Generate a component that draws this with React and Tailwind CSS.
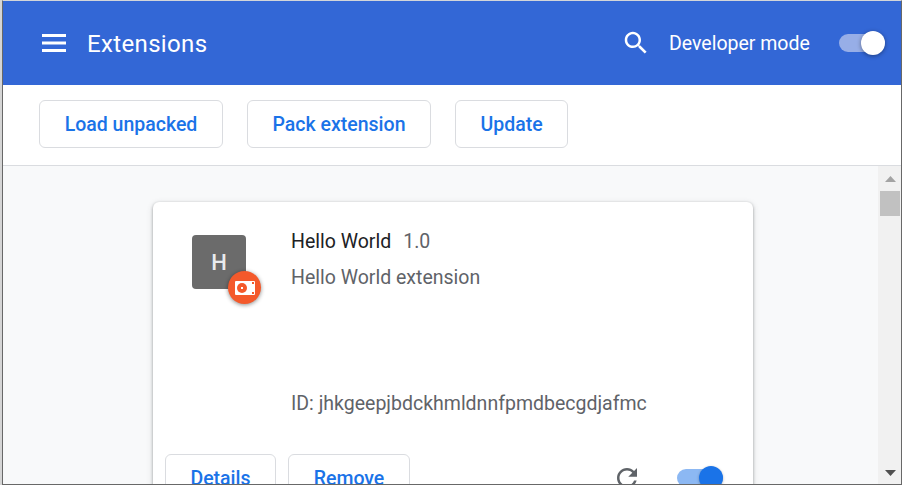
import React from "react";

const actions = [
  { label: "Load unpacked", width: "w-[184px]" },
  { label: "Pack extension", width: "w-[184px]" },
  { label: "Update", width: "w-[113px]" },
];

function OutlineButton({ children, width }) {
  return (
    <button
      className={`${width} flex h-12 shrink-0 items-center justify-center whitespace-nowrap rounded-md border border-[#dadce0] bg-white pt-0.5 text-[19.5px] font-medium leading-none text-[#1a73e8]`}
    >
      {children}
    </button>
  );
}

function Toolbar() {
  return (
    <header className="flex h-[84px] shrink-0 items-center bg-[#3367d6] text-white">
      <svg className="ml-[39px] h-[18px] w-6 shrink-0" viewBox="0 0 24 18" fill="currentColor">
        <path d="M0 0h24v3H0zM0 8h24v2H0zM0 15h24v3H0z" />
        <path d="M0 7h24v1H0zM0 10h24v1H0z" opacity=".5" />
      </svg>
      <h1 className="ml-[21px] pt-0.5 text-[24px] font-normal leading-[36px] tracking-[0.35px]">Extensions</h1>
      <svg className="ml-auto h-[30px] w-[30px] shrink-0" viewBox="0 0 24 24" fill="currentColor">
        <path d="M15.5 14h-.79l-.28-.27C15.41 12.59 16 11.11 16 9.5 16 5.91 13.09 3 9.5 3S3 5.91 3 9.5 5.91 16 9.5 16c1.61 0 3.09-.59 4.23-1.57l.27.28v.79l5 4.99L20.49 19l-4.99-5zm-6 0C7.01 14 5 11.99 5 9.5S7.01 5 9.5 5 14 7.01 14 9.5 11.99 14 9.5 14z" />
      </svg>
      <span className="ml-[18px] w-[143px] whitespace-nowrap pt-0.5 text-[19.5px] leading-[30px]">Developer mode</span>
      <span className="ml-[27px] mr-4 flex h-[18px] w-[46px] shrink-0 items-center justify-end rounded-full bg-[#97aee7]">
        <span className="h-6 w-6 shrink-0 rounded-full bg-white shadow-[0_1px_4px_rgba(0,0,0,0.4)]" />
      </span>
    </header>
  );
}

function ExtensionIcon() {
  return (
    <div className="relative ml-[39px] mt-[33px] flex h-[54px] w-[54px] shrink-0 items-center justify-center rounded-[4px] bg-[#6b6b6b] text-[22px] font-medium text-[#e8eaed]">
      H
      <span className="absolute left-9 top-9 flex h-[33px] w-[33px] items-center justify-center rounded-full bg-[#f4592b] shadow-[0_1px_4px_rgba(0,0,0,0.45)]">
        <svg className="h-[14px] w-5" viewBox="0 0 20 14">
          <rect width="20" height="14" rx="1" fill="#fff" />
          <circle cx="7" cy="7" r="5" fill="#f4592b" />
          <rect x="6" y="6" width="2" height="2" fill="#fff" />
          <path d="M17 1h2v2h-2zM17 11h2v2h-2z" fill="#f4592b" />
        </svg>
      </span>
    </div>
  );
}

function ExtensionCard() {
  return (
    <article className="ml-[150px] mt-9 flex h-[320px] w-[600px] shrink-0 flex-col rounded-md bg-white shadow-[0_1px_3px_rgba(60,64,67,0.45),0_2px_7px_rgba(60,64,67,0.16)]">
      <div className="flex h-[252px] shrink-0">
        <ExtensionIcon />
        <div className="ml-[45px] flex flex-col pt-[25px] text-[19.5px] leading-[30px] text-[#5f6368]">
          <div className="flex gap-3">
            <span className="text-[#202124]">Hello World</span>
            <span>1.0</span>
          </div>
          <p className="mt-1.5">Hello World extension</p>
          <p className="mt-24 whitespace-nowrap">ID: jhkgeepjbdckhmldnnfpmdbecgdjafmc</p>
        </div>
      </div>
      <footer className="flex h-12 shrink-0 items-center gap-3 pl-3">
        <OutlineButton width="w-[111px]">Details</OutlineButton>
        <OutlineButton width="w-[122px]">Remove</OutlineButton>
        <svg className="ml-auto h-[30px] w-[30px] shrink-0" viewBox="0 0 24 24" fill="#5f6368">
          <path d="M17.65 6.35C16.2 4.9 14.21 4 12 4c-4.42 0-7.99 3.58-7.99 8s3.57 8 7.99 8c3.73 0 6.84-2.55 7.73-6h-2.08c-.82 2.33-3.04 4-5.65 4-3.31 0-6-2.69-6-6s2.69-6 6-6c1.66 0 3.14.69 4.22 1.78L13 11h7V4l-2.35 2.35z" />
        </svg>
        <span className="ml-[23px] mr-[30px] flex h-[18px] w-[46px] shrink-0 items-center justify-end rounded-full bg-[#8cb8f3]">
          <span className="h-6 w-6 shrink-0 rounded-full bg-[#1a73e8] shadow-[0_1px_3px_rgba(0,0,0,0.3)]" />
        </span>
      </footer>
    </article>
  );
}

function Scrollbar() {
  return (
    <div className="flex w-[23px] shrink-0 flex-col items-center bg-[#f1f1f1] pl-px">
      <svg className="mt-[10px] h-[6px] w-[11px] shrink-0" viewBox="0 0 11 6" fill="#a3a3a3">
        <path d="M5.5 0 11 6H0z" />
      </svg>
      <div className="mt-[9px] h-[25px] w-5 shrink-0 bg-[#c1c1c1]" />
      <svg className="mb-[8px] mt-auto h-[6px] w-[11px] shrink-0" viewBox="0 0 11 6" fill="#505050">
        <path d="M0 0h11L5.5 6z" />
      </svg>
    </div>
  );
}

export default function App() {
  return (
    <div className="flex h-[485px] w-[902px] overflow-hidden bg-[#d5d5d5] pl-0.5 font-['Roboto',sans-serif]">
      <main className="flex h-full w-[900px] flex-col overflow-hidden border border-[#686868] border-t-[#d3d5d9] bg-white">
        <Toolbar />
        <div className="flex h-[81px] shrink-0 gap-6 border-b border-[#dadce0] pl-9 pt-[15px]">
          {actions.map((action) => (
            <OutlineButton key={action.label} width={action.width}>
              {action.label}
            </OutlineButton>
          ))}
        </div>
        <div className="flex min-h-0 flex-1 overflow-hidden">
          <section className="flex min-w-0 flex-1 flex-col overflow-hidden bg-[#f8f9fa]">
            <ExtensionCard />
          </section>
          <Scrollbar />
        </div>
      </main>
    </div>
  );
}
